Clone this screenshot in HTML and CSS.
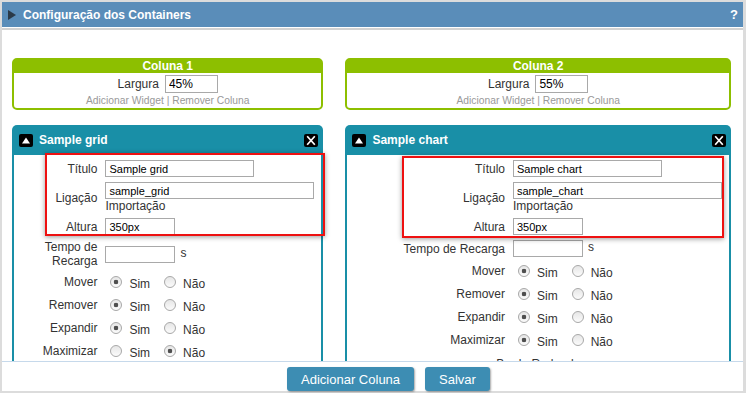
FILE: index.html
```html
<!DOCTYPE html>
<html lang="pt">
<head>
    <meta charset="UTF-8">
    <meta name="viewport" content="width=device-width, initial-scale=1.0">
    <title>Configuração dos Containers</title>
    <link rel="stylesheet" href="styles.css">
</head>
<body>
    <div class="dialog">
        <div class="dialog-head">
            <span class="arrow"></span>
            <span class="dialog-title">Configuração dos Containers</span>
            <span class="help">?</span>
        </div>

        <div class="dialog-body">
            <div class="columns">
                <!-- Coluna 1 -->
                <div class="col col-1">
                    <div class="col-box">
                        <div class="col-head">Coluna 1</div>
                        <div class="col-body">
                            <div class="col-width">
                                <label>Largura</label>
                                <input type="text" class="txt txt-pct" value="45%">
                            </div>
                            <div class="col-links"><a href="#">Adicionar Widget</a> | <a href="#">Remover Coluna</a></div>
                        </div>
                    </div>

                    <div class="widget">
                        <div class="widget-head">
                            <svg class="icon" width="14" height="13" viewBox="0 0 14 13"><rect width="14" height="13" rx="2" fill="#000"/><path d="M7 3.5 L11 9.5 H3 Z" fill="#fff"/></svg>
                            <span class="widget-title">Sample grid</span>
                            <svg class="icon" width="14" height="13" viewBox="0 0 14 13"><rect width="14" height="13" rx="2" fill="#000"/><path d="M3.2 2.2 L10.8 10.8 M10.8 2.2 L3.2 10.8" stroke="#fff" stroke-width="1.7"/></svg>
                        </div>
                        <div class="widget-body">
                            <label>Título</label>
                            <div class="val"><input type="text" class="txt txt-md" value="Sample grid"></div>

                            <label>Ligação</label>
                            <div class="val">
                                <input type="text" class="txt txt-lg" value="sample_grid">
                                <div class="hint">Importação</div>
                            </div>

                            <label>Altura</label>
                            <div class="val"><input type="text" class="txt txt-sm" value="350px"></div>

                            <label>Tempo de Recarga</label>
                            <div class="val"><input type="text" class="txt txt-sm" value=""><span class="unit">s</span></div>

                            <label>Mover</label>
                            <div class="opts">
                                <label class="opt"><input type="radio" name="g-mover" checked><span>Sim</span></label>
                                <label class="opt"><input type="radio" name="g-mover"><span>Não</span></label>
                            </div>

                            <label>Remover</label>
                            <div class="opts">
                                <label class="opt"><input type="radio" name="g-remover" checked><span>Sim</span></label>
                                <label class="opt"><input type="radio" name="g-remover"><span>Não</span></label>
                            </div>

                            <label>Expandir</label>
                            <div class="opts">
                                <label class="opt"><input type="radio" name="g-expandir" checked><span>Sim</span></label>
                                <label class="opt"><input type="radio" name="g-expandir"><span>Não</span></label>
                            </div>

                            <label>Maximizar</label>
                            <div class="opts">
                                <label class="opt"><input type="radio" name="g-max"><span>Sim</span></label>
                                <label class="opt"><input type="radio" name="g-max" checked><span>Não</span></label>
                            </div>

                            <div class="section">Borda Redonda</div>
                        </div>
                        <div class="highlight highlight-1"></div>
                    </div>
                </div>

                <!-- Coluna 2 -->
                <div class="col col-2">
                    <div class="col-box">
                        <div class="col-head">Coluna 2</div>
                        <div class="col-body">
                            <div class="col-width">
                                <label>Largura</label>
                                <input type="text" class="txt txt-pct" value="55%">
                            </div>
                            <div class="col-links"><a href="#">Adicionar Widget</a> | <a href="#">Remover Coluna</a></div>
                        </div>
                    </div>

                    <div class="widget">
                        <div class="widget-head">
                            <svg class="icon" width="14" height="13" viewBox="0 0 14 13"><rect width="14" height="13" rx="2" fill="#000"/><path d="M7 3.5 L11 9.5 H3 Z" fill="#fff"/></svg>
                            <span class="widget-title">Sample chart</span>
                            <svg class="icon" width="14" height="13" viewBox="0 0 14 13"><rect width="14" height="13" rx="2" fill="#000"/><path d="M3.2 2.2 L10.8 10.8 M10.8 2.2 L3.2 10.8" stroke="#fff" stroke-width="1.7"/></svg>
                        </div>
                        <div class="widget-body">
                            <label>Título</label>
                            <div class="val"><input type="text" class="txt txt-md" value="Sample chart"></div>

                            <label>Ligação</label>
                            <div class="val">
                                <input type="text" class="txt txt-lg" value="sample_chart">
                                <div class="hint">Importação</div>
                            </div>

                            <label>Altura</label>
                            <div class="val"><input type="text" class="txt txt-sm" value="350px"></div>

                            <label>Tempo de Recarga</label>
                            <div class="val"><input type="text" class="txt txt-sm" value=""><span class="unit">s</span></div>

                            <label>Mover</label>
                            <div class="opts">
                                <label class="opt"><input type="radio" name="c-mover" checked><span>Sim</span></label>
                                <label class="opt"><input type="radio" name="c-mover"><span>Não</span></label>
                            </div>

                            <label>Remover</label>
                            <div class="opts">
                                <label class="opt"><input type="radio" name="c-remover" checked><span>Sim</span></label>
                                <label class="opt"><input type="radio" name="c-remover"><span>Não</span></label>
                            </div>

                            <label>Expandir</label>
                            <div class="opts">
                                <label class="opt"><input type="radio" name="c-expandir" checked><span>Sim</span></label>
                                <label class="opt"><input type="radio" name="c-expandir"><span>Não</span></label>
                            </div>

                            <label>Maximizar</label>
                            <div class="opts">
                                <label class="opt"><input type="radio" name="c-max" checked><span>Sim</span></label>
                                <label class="opt"><input type="radio" name="c-max"><span>Não</span></label>
                            </div>

                            <div class="section">Borda Redonda</div>
                        </div>
                        <div class="highlight highlight-2"></div>
                    </div>
                </div>
            </div>
        </div>

        <div class="dialog-foot">
            <button>Adicionar Coluna</button>
            <button>Salvar</button>
        </div>
    </div>
</body>
</html>
```

FILE: styles.css
```css
html, body {
    margin: 0;
    padding: 0;
}
body {
    font-family: 'Liberation Sans', Arial, sans-serif;
    font-size: 12px;
    color: #333;
    background-color: #fff;
}
.dialog {
    box-sizing: border-box;
    width: 746px;
    height: 393px;
    border: 2px solid #dcdcdc;
    border-right-width: 3px;
    display: flex;
    flex-direction: column;
    background-color: #fff;
}
.dialog-head {
    height: 25px;
    flex: 0 0 25px;
    background-color: #5a8db9;
    display: flex;
    align-items: center;
    padding: 0 5px 0 6px;
    color: white;
    font-weight: bold;
    font-size: 12px;
    margin-bottom: 1px;
}
.arrow {
    width: 0;
    height: 0;
    border-left: 8px solid #2b3a48;
    border-top: 5px solid transparent;
    border-bottom: 5px solid transparent;
    margin-right: 7px;
}
.dialog-title {
    flex: 1;
}
.help {
    font-size: 13px;
}
.dialog-body {
    flex: 1;
    overflow: hidden;
    border-top: 2px solid #d2d2d2;
    border-bottom: 1px solid #c6d9eb;
}
.columns {
    display: flex;
    padding-top: 28px;
}
.col {
    box-sizing: border-box;
    padding: 0 12px 0 10px;
}
.col-1 {
    flex: 0 0 45%;
}
.col-2 {
    flex: 0 0 55%;
}
.col-box {
    border: 2px solid #8dbf00;
    border-radius: 5px;
    text-align: center;
}
.col-head {
    background-color: #8dbf00;
    color: white;
    font-weight: bold;
    height: 13px;
    line-height: 13px;
}
.col-body {
    padding-top: 2px;
}
.col-width {
    display: flex;
    justify-content: center;
    align-items: center;
    gap: 6px;
}
.col-links {
    font-size: 10.3px;
    line-height: 14px;
    color: #999;
    margin-top: 1px;
}
.col-links a {
    color: #999;
    text-decoration: none;
}
.txt {
    box-sizing: border-box;
    height: 17px;
    border: 1px solid #a9a9a9;
    padding: 0 3px;
    font-family: 'Liberation Sans', Arial, sans-serif;
    font-size: 11px;
    color: #000;
    background: #fff;
    margin: 0;
    outline: none;
}
.txt-pct {
    width: 53px;
    height: 18px;
    font-size: 12px;
}
.txt-sm {
    width: 70px;
}
.txt-md {
    width: 149px;
}
.txt-lg {
    width: 209px;
}
.widget {
    position: relative;
    margin-top: 15px;
}
.widget-head {
    height: 30px;
    background-color: #198fa7;
    border-radius: 5px 5px 0 0;
    display: flex;
    align-items: center;
    padding: 0 5px 0 7px;
    color: white;
    font-weight: bold;
}
.widget-head .icon {
    display: block;
    flex: 0 0 auto;
}
.widget-title {
    flex: 1;
    margin-left: 6px;
}
.widget-body {
    border: 2px solid #198fa7;
    border-top: none;
    border-bottom: none;
    display: grid;
    grid-template-columns: 1fr 216px;
    column-gap: 8px;
    row-gap: 5px;
    align-items: center;
    padding: 5px 0 10px;
}
.widget-body > label {
    text-align: right;
    line-height: 14px;
}
.val {
    display: flex;
    flex-wrap: wrap;
    align-items: center;
}
.hint {
    flex: 0 0 100%;
    line-height: 14px;
}
.unit {
    margin-left: 5px;
    margin-top: -3px;
}
.opts {
    display: flex;
    align-items: center;
    min-height: 18px;
}
.opt {
    display: flex;
    align-items: center;
    margin-right: 9px;
}
.opt span {
    padding-top: 4px;
    line-height: 14px;
}
.opt input {
    appearance: none;
    -webkit-appearance: none;
    box-sizing: border-box;
    width: 12px;
    height: 12px;
    margin: 0 7px 0 5px;
    border: 1px solid #a8a8a8;
    border-radius: 50%;
    background: linear-gradient(#e6e6e6, #fbfbfb);
}
.opt input:checked {
    background: radial-gradient(circle, #4f4f4f 0 2px, transparent 2.6px), linear-gradient(#e6e6e6, #fbfbfb);
}
.section {
    grid-column: 1 / -1;
    text-align: center;
    line-height: 14px;
    margin-top: 3px;
}
.highlight {
    position: absolute;
    box-sizing: border-box;
    border: 2px solid #ee1111;
    box-shadow: 0 1px 5px rgba(0, 0, 0, 0.4);
}
.highlight-1 {
    left: 33px;
    top: 28px;
    width: 280px;
    height: 83px;
}
.highlight-2 {
    left: 57px;
    top: 31px;
    width: 322px;
    height: 82px;
}
.dialog-foot {
    flex: 0 0 29px;
    display: flex;
    justify-content: center;
    align-items: flex-start;
    gap: 11px;
    padding: 5px 0 0 32px;
    box-sizing: border-box;
}
button {
    height: 24px;
    background-color: #3d8db3;
    color: white;
    border: none;
    border-radius: 3px;
    padding: 0 14px;
    font-family: 'Liberation Sans', Arial, sans-serif;
    font-size: 13px;
    box-shadow: 1px 1px 2px rgba(0, 0, 0, 0.35);
    cursor: pointer;
}
```
